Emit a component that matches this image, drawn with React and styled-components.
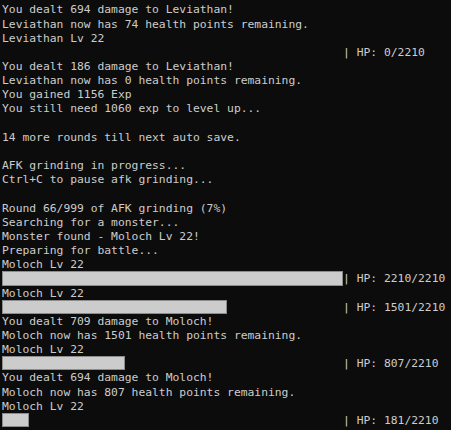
import React from "react";
import styled, { createGlobalStyle } from "styled-components";

const Global = createGlobalStyle`
  html, body { margin: 0; padding: 0; background: #0c0c0c; }
  body { overflow: hidden; }
`;

const Terminal = styled.div`
  width: 451px;
  height: 430px;
  box-sizing: border-box;
  padding: 2.4px 0 0 2px;
  background: #0c0c0c;
  color: #cccccc;
  font-family: "DejaVu Sans Mono", "Liberation Mono", monospace;
  font-size: 11.33px;
  line-height: 14.17px;
  overflow: hidden;
`;

const Line = styled.div`
  white-space: pre;
  height: 14.17px;
`;

const GaugeLine = styled.div`
  display: flex;
  height: 14.17px;
  white-space: pre;
`;

const Track = styled.div`
  width: 50ch;
  height: 100%;
  flex: none;
`;

const Fill = styled.div`
  height: 100%;
  background: #cccccc;
  box-shadow: inset 0 0 0 1px #8c8c8c;
`;

const HpText = styled.span``;

const Gauge = ({ hp, max = 2210 }) => {
  const cells = Math.floor((hp / max) * 50);
  return (
    <GaugeLine>
      <Track>
        <Fill style={{ width: `${cells}ch` }} />
      </Track>
      <HpText>{`| HP: ${hp}/${max}`}</HpText>
    </GaugeLine>
  );
};

const rows = [
  "You dealt 694 damage to Leviathan!",
  "Leviathan now has 74 health points remaining.",
  "Leviathan Lv 22",
  { hp: 0 },
  "You dealt 186 damage to Leviathan!",
  "Leviathan now has 0 health points remaining.",
  "You gained 1156 Exp",
  "You still need 1060 exp to level up...",
  "",
  "14 more rounds till next auto save.",
  "",
  "AFK grinding in progress...",
  "Ctrl+C to pause afk grinding...",
  "",
  "Round 66/999 of AFK grinding (7%)",
  "Searching for a monster...",
  "Monster found - Moloch Lv 22!",
  "Preparing for battle...",
  "Moloch Lv 22",
  { hp: 2210 },
  "Moloch Lv 22",
  { hp: 1501 },
  "You dealt 709 damage to Moloch!",
  "Moloch now has 1501 health points remaining.",
  "Moloch Lv 22",
  { hp: 807 },
  "You dealt 694 damage to Moloch!",
  "Moloch now has 807 health points remaining.",
  "Moloch Lv 22",
  { hp: 181 },
];

export default function App() {
  return (
    <>
      <Global />
      <Terminal>
        {rows.map((r, i) =>
          typeof r === "string" ? (
            <Line key={i}>{r || " "}</Line>
          ) : (
            <Gauge key={i} hp={r.hp} />
          )
        )}
      </Terminal>
    </>
  );
}
